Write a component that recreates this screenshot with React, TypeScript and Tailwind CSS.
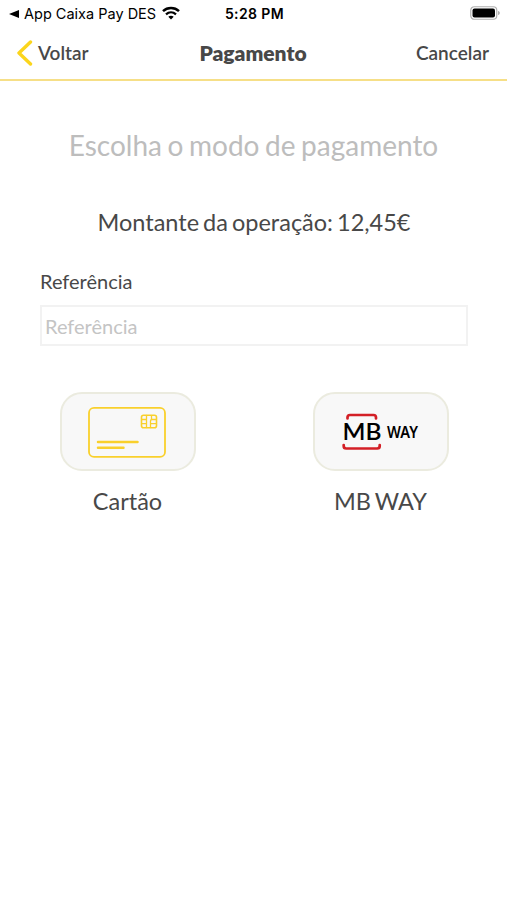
import { useState } from 'react';
import type { ReactNode } from 'react';

function StatusBar() {
  return (
    <div className="grid h-[28px] grid-cols-3 items-center pl-[9px] pr-[7px] font-['Inter','Liberation_Sans',sans-serif] text-black">
      <div className="flex items-center whitespace-nowrap text-[14.5px] leading-none">
        <svg className="mr-[5px] h-[8px] w-[10px] shrink-0" viewBox="0 0 10 8">
          <path d="M10 0v8L0 4z" fill="black" />
        </svg>
        <span>App Caixa Pay DES</span>
        <svg className="mb-[2px] ml-[6px] h-[14px] w-[18px] shrink-0" viewBox="0 0 18 14" fill="none" stroke="black">
          <path d="M1 5.1C5.5.9 12.500.9 17 5.100" strokeWidth="2.500" />
          <path d="M4 8.300c3-2.600 7-2.600 10 0" strokeWidth="2.300" />
          <path d="M9 13.500 6.300 10.700c1.500-1.400 3.900-1.400 5.400 0z" fill="black" stroke="none" />
        </svg>
      </div>
      <span className="text-center text-[14px] font-semibold leading-none tracking-[0.4px]">5:28 PM</span>
      <svg className="mb-[2px] h-[14px] w-[30px] justify-self-end" viewBox="0 0 30 14">
        <rect x="0.750" y="0.750" width="26" height="12.500" rx="3.500" fill="white" stroke="#b0b0b0" strokeWidth="1.200" />
        <rect x="2.500" y="2.500" width="22.500" height="9" rx="2" fill="black" />
        <path d="M28 5v4c1.300-.4 1.800-1.100 1.800-2S29.300 5.400 28 5z" fill="#b0b0b0" />
      </svg>
    </div>
  );
}

function Header() {
  return (
    <header className="grid h-[53px] grid-cols-3 items-center border-b-2 border-[#f6df87] pb-[2px] pl-[17px] pr-[18px] text-[19px] font-semibold leading-none text-[#484848]">
      <button type="button" className="flex items-center gap-[4px]">
        <svg className="h-[26px] w-[17px]" viewBox="0 0 17 26" fill="none">
          <path d="M13.500 2 2 13l11.500 11" stroke="#fbd51c" strokeWidth="3.400" strokeLinecap="round" strokeLinejoin="round" />
        </svg>
        Voltar
      </button>
      <h1 className="text-center text-[21px] font-extrabold">Pagamento</h1>
      <button type="button" className="justify-self-end">Cancelar</button>
    </header>
  );
}

function CardIcon() {
  return (
    <svg className="h-[52px] w-[80px]" viewBox="0 0 80 52" fill="none" stroke="#f9d02c" strokeLinecap="round">
      <rect x="2" y="1.900" width="76" height="49" rx="5" strokeWidth="1.800" />
      <path d="M11 36h39.500M11 41.700h25.500" strokeWidth="2.500" />
      <rect x="54.500" y="9.300" width="15" height="12.500" rx="2" strokeWidth="1.600" />
      <path d="M55 13.500h4.500M55 17.600h4.500M59.500 9.500v12M69 13.500h-4c-1 0-1.500.5-1.500 1.500v6.500M63.500 17.600H69M64.500 13.500V10" strokeWidth="1.300" />
    </svg>
  );
}

function MbWayLogo() {
  return (
    <svg className="h-[38px] w-[80px]" viewBox="-2 0 80 38">
      <g fill="none" stroke="#d31f26" strokeWidth="2.700" strokeLinecap="round">
        <path d="M5.500 5.500V4.500q0-2.500 2.500-2.500h23.500q2.500 0 2.500 2.500v1" />
        <path d="M1.700 32v1q0 2.500 2.500 2.500h31q2.500 0 2.500-2.500v-1" />
      </g>
      <text x="0.500" y="26.800" textLength="39" lengthAdjust="spacingAndGlyphs" className="font-['Lato',sans-serif] text-[22.5px] font-semibold" fill="black">MB</text>
      <text x="45" y="25" textLength="31" lengthAdjust="spacingAndGlyphs" className="font-['Noto_Sans',sans-serif] text-[15.5px] font-semibold" fill="black">WAY</text>
    </svg>
  );
}

interface PaymentOptionProps {
  label: string;
  children: ReactNode;
}

function PaymentOption({ label, children }: PaymentOptionProps) {
  return (
    <button type="button" className="flex flex-col items-center">
      <span className="flex h-[79px] w-[136px] items-center justify-center rounded-[22px] border-2 border-[#ebebdf] bg-[#f8f8f8] pr-[1px]">
        {children}
      </span>
      <span className="mt-[15px] text-[23.5px] leading-[30px] [word-spacing:-2px]">{label}</span>
    </button>
  );
}

export default function App() {
  const [reference, setReference] = useState('');

  return (
    <div className="min-h-screen bg-white font-['Lato','Liberation_Sans',sans-serif] text-[#484848]">
      <StatusBar />
      <Header />

      <main>
        <h2 className="mt-[46px] text-center text-[28px] leading-[36px] text-[#bdbdbd] [word-spacing:-1.6px]">
          Escolha o modo de pagamento
        </h2>
        <p className="mt-[44px] pl-[1px] text-center text-[23.5px] leading-[30px] [word-spacing:-2px]">
          Montante da operação: 12,45€
        </p>

        {/* Reference */}
        <div className="mt-[32px] flex flex-col pl-[40px] pr-[39px]">
          <label htmlFor="reference" className="text-[20px] leading-[24px]">Referência</label>
          <input
            id="reference"
            type="text"
            value={reference}
            onChange={(e) => setReference(e.target.value)}
            placeholder="Referência"
            className="mt-[12px] h-[41px] w-full border-2 border-[#f2f2f2] px-[3px] text-[20px] placeholder:text-[#c4c4c4] focus:outline-none"
          />
        </div>

        {/* Payment methods */}
        <div className="mt-[46px] grid grid-cols-2 pl-px">
          <PaymentOption label="Cartão">
            <CardIcon />
          </PaymentOption>
          <PaymentOption label="MB WAY">
            <MbWayLogo />
          </PaymentOption>
        </div>
      </main>
    </div>
  );
}
